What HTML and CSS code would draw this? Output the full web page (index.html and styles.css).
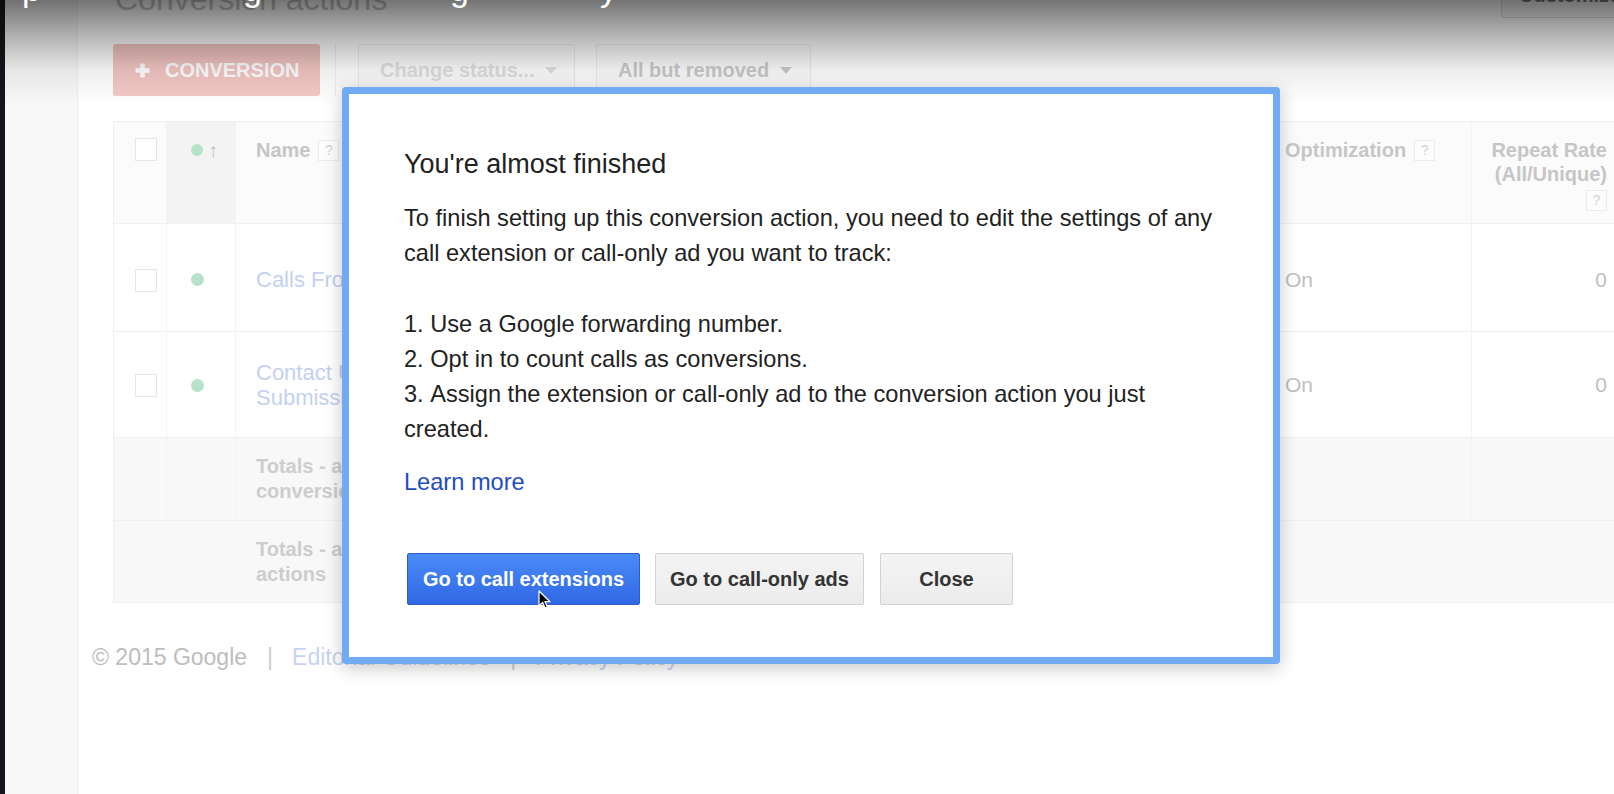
FILE: index.html
```html
<!DOCTYPE html>
<html lang="en">
<head>
<meta charset="utf-8">
<title>Conversion actions</title>
<link rel="stylesheet" href="styles.css">
</head>
<body>
  <div class="edge"></div>
  <aside class="sidebar"></aside>
  <main class="main">
    <div class="headrow">
      <h1 class="page-title">Conversion actions</h1>
      <div class="custom-btn">Customize columns</div>
    </div>

    <div class="toolbar">
      <div class="btn-add">
        <svg class="plus" width="15" height="15" viewBox="0 0 15 15"><path d="M7.5 0.5v14M0.5 7.5h14" stroke="#fff" stroke-width="4.5"/></svg>
        <span>CONVERSION</span>
      </div>
      <div class="tb-divider"></div>
      <div class="btn-drop is-disabled">
        <span>Change status...</span>
        <svg class="caret" width="12" height="7" viewBox="0 0 12 7"><path d="M0 0h12L6 7z" fill="currentColor"/></svg>
      </div>
      <div class="btn-drop is-filter">
        <span>All but removed</span>
        <svg class="caret" width="12" height="7" viewBox="0 0 12 7"><path d="M0 0h12L6 7z" fill="currentColor"/></svg>
      </div>
    </div>

    <div class="table">
      <div class="tr thead">
        <div class="td c-check"><span class="cb"></span></div>
        <div class="td c-status is-sorted"><span class="dot dot-sm"></span><span class="sort">&#8593;</span></div>
        <div class="td c-name"><span>Name</span><span class="help">?</span></div>
        <div class="td c-mid"></div>
        <div class="td c-opt"><span>Optimization</span><span class="help">?</span></div>
        <div class="td c-rate"><span class="rate-head">Repeat Rate<br>(All/Unique)<br><span class="help">?</span></span></div>
      </div>
      <div class="tr row row-1">
        <div class="td c-check"><span class="cb"></span></div>
        <div class="td c-status"><span class="dot"></span></div>
        <div class="td c-name"><a class="name-link">Calls From Ads</a></div>
        <div class="td c-mid"></div>
        <div class="td c-opt">On</div>
        <div class="td c-rate">0</div>
      </div>
      <div class="tr row row-2">
        <div class="td c-check"><span class="cb"></span></div>
        <div class="td c-status"><span class="dot"></span></div>
        <div class="td c-name"><a class="name-link">Contact Us Form<br>Submissions</a></div>
        <div class="td c-mid"></div>
        <div class="td c-opt">On</div>
        <div class="td c-rate">0</div>
      </div>
      <div class="tr total total-1">
        <div class="td c-check"></div>
        <div class="td c-status"></div>
        <div class="td c-name"><span class="total-label">Totals - all<br>conversions</span></div>
        <div class="td c-mid"></div>
        <div class="td c-opt"></div>
        <div class="td c-rate"></div>
      </div>
      <div class="tr total total-2">
        <div class="td c-check"></div>
        <div class="td c-status"></div>
        <div class="td c-name"><span class="total-label">Totals - all conversion<br>actions</span></div>
        <div class="td c-mid"></div>
        <div class="td c-opt"></div>
        <div class="td c-rate"></div>
      </div>
    </div>

    <footer class="footer">
      <span>&copy; 2015 Google</span>
      <span class="sep">|</span>
      <a class="foot-link">Editorial Guidelines</a>
      <span class="sep">|</span>
      <a class="foot-link">Privacy Policy</a>
    </footer>
  </main>

  <div class="shade"></div>
  <div class="vt">
    <span class="vt-l vt-1">p</span>
    <span class="vt-l vt-2">g</span>
    <span class="vt-l vt-3">g</span>
    <span class="vt-l vt-4">y</span>
  </div>

  <div class="modal" role="dialog">
    <h2 class="modal-title">You're almost finished</h2>
    <p class="modal-text">To finish setting up this conversion action, you need to edit the settings of any<br>call extension or call-only ad you want to track:</p>
    <ol class="modal-list">
      <li>Use a Google forwarding number.</li>
      <li>Opt in to count calls as conversions.</li>
      <li>Assign the extension or call-only ad to the conversion action you just<br>created.</li>
    </ol>
    <a class="modal-link">Learn more</a>
    <div class="modal-actions">
      <button class="btn btn-primary">Go to call extensions</button>
      <button class="btn btn-secondary">Go to call-only ads</button>
      <button class="btn btn-close">Close</button>
    </div>
  </div>

  <svg class="cursor" width="13" height="19" viewBox="0 0 13 19"><path d="M1 1v15l3.6-3.5 2.6 5.6 2.2-1-2.5-5.4H12z" fill="#000" stroke="#fff" stroke-width="1.2" stroke-linejoin="round"/></svg>
</body>
</html>
```

FILE: styles.css
```css
* { box-sizing: border-box; }

html, body { height: 100%; }

body {
  margin: 0;
  width: 1614px;
  height: 794px;
  overflow: hidden;
  display: flex;
  position: relative;
  background: #fff;
  font-family: "Liberation Sans", Arial, Helvetica, sans-serif;
}

.edge {
  flex: none;
  width: 5px;
  background: #13161b;
}

.sidebar {
  flex: none;
  width: 73px;
  background: #f8f8f8;
  border-right: 1px solid #eeeeee;
}

.main {
  flex: 1;
  min-width: 0;
  padding-left: 14px;
  display: flex;
  flex-direction: column;
}

/* heading row */
.headrow {
  display: flex;
  align-items: flex-end;
  justify-content: space-between;
  height: 46px;
  margin: -28px 0 0 21px;
}

.page-title {
  margin: 0 0 1px;
  padding-left: 2px;
  font-size: 32px;
  line-height: 36px;
  font-weight: normal;
  color: #c4c4c4;
  white-space: nowrap;
}

.custom-btn {
  flex: none;
  width: 130px;
  height: 46px;
  margin-right: -17px;
  padding: 10px 0 0 17px;
  border: 1px solid #dcdcdc;
  border-radius: 3px;
  background: #f7f7f7;
  font-size: 20px;
  line-height: 24px;
  font-weight: bold;
  color: #7a7a7a;
  white-space: nowrap;
  overflow: hidden;
}

/* toolbar */
.toolbar {
  display: flex;
  height: 52px;
  margin: 26px 0 0 21px;
}

.btn-add {
  width: 207px;
  display: flex;
  align-items: center;
  gap: 15px;
  padding-left: 22px;
  border-radius: 3px;
  background: linear-gradient(#f1c2bf, #f4cac7);
  color: #fff;
  font-size: 20px;
  font-weight: bold;
}

.plus { flex: none; }

.tb-divider {
  width: 1px;
  margin: 0 22px 0 15px;
  background: #efefef;
}

.btn-drop {
  display: flex;
  align-items: center;
  gap: 11px;
  padding: 0 20px 0 21px;
  border: 1px solid #ededed;
  border-radius: 2px;
  background: #fdfdfd;
  font-size: 20px;
  font-weight: bold;
  color: #cacaca;
  white-space: nowrap;
}

.btn-drop.is-disabled {
  width: 217px;
  color: #e0e0e0;
}

.btn-drop.is-filter {
  width: 215px;
  margin-left: 21px;
}

.caret { flex: none; }

/* table */
.table {
  margin: 25px 0 0 21px;
  border: 1px solid #f0f0f0;
  border-right: none;
}

.tr {
  display: grid;
  grid-template-columns: 53px 69px 240px 1fr 196px 142px;
  border-bottom: 1px solid #f0f0f0;
}

.tr:last-child { border-bottom: none; }

.td {
  display: flex;
  align-items: center;
  border-right: 1px solid #f4f4f4;
  min-width: 0;
}

.td:last-child {
  border-right: none;
  justify-content: flex-end;
  padding-right: 7px;
}

.thead {
  height: 102px;
  background: #fbfbfb;
  font-size: 20px;
  line-height: 24px;
  font-weight: bold;
  color: #c6c6c6;
}

.thead .td {
  align-items: flex-start;
  padding-top: 16px;
}

.thead .c-status.is-sorted { background: #f3f3f3; }

.c-check { padding-left: 21px; }
.c-status { padding-left: 24px; gap: 5px; }
.c-name { padding-left: 20px; }
.c-opt { padding-left: 9px; }

.cb {
  display: block;
  width: 22px;
  height: 23px;
  border: 1px solid #e6e6e6;
  background: #fff;
}

.dot {
  display: block;
  width: 13px;
  height: 13px;
  border-radius: 50%;
  background: #b6e2ca;
}

.dot-sm {
  width: 12px;
  height: 12px;
  margin-top: 6px;
}

.sort {
  font-size: 20px;
  font-weight: bold;
  color: #c4c4c4;
}

.help {
  display: inline-block;
  width: 21px;
  height: 21px;
  margin-left: 8px;
  border: 1px solid #ececec;
  background: #fdfdfd;
  font-size: 14px;
  line-height: 19px;
  text-align: center;
  font-weight: normal;
  color: #d3d3d3;
}

.c-name .help, .c-opt .help { margin-top: 2px; }

.rate-head {
  text-align: right;
}

.rate-head .help {
  margin: 3px 0 0;
}

.row {
  font-size: 21px;
  color: #c0c0c0;
}

.row-1 { height: 108px; }
.row-1 .td { padding-top: 4px; }
.row-1 .c-check { padding-top: 5px; }
.row-2 { height: 106px; }
.row-2 .td { padding-top: 1px; }

.name-link {
  font-size: 22px;
  line-height: 25px;
  color: #c3d1f1;
}

.total {
  background: #f8f8f8;
  font-size: 20px;
  line-height: 25px;
  font-weight: bold;
  color: #cdcdcd;
}

.total-1 { height: 83px; }
.total-2 { height: 81px; }

.total-2 .td { border-right-color: transparent; }

.total-label { white-space: nowrap; }

/* footer */
.footer {
  display: flex;
  margin-top: 39px;
  font-size: 23px;
  line-height: 30px;
  color: #bdbdbd;
  white-space: nowrap;
}

.sep {
  margin: 0 19px 0 20px;
  color: #cccccc;
}

.foot-link { color: #c6d3f3; }

/* video overlay shading */
.shade {
  position: absolute;
  left: 0;
  top: 0;
  right: 0;
  height: 110px;
  background: linear-gradient(rgba(0,0,0,.55), rgba(0,0,0,.28) 37px, rgba(0,0,0,.07) 70px, rgba(0,0,0,0) 105px);
  pointer-events: none;
  z-index: 1;
}

.vt {
  position: absolute;
  left: 0;
  top: 0;
  z-index: 2;
  font-size: 34px;
  line-height: 34px;
  color: #fff;
}

.vt-l { position: absolute; top: -28px; }
.vt-1 { left: 22px; }
.vt-2 { left: 243px; }
.vt-3 { left: 450px; }
.vt-4 { left: 600px; }

/* dialog */
.modal {
  position: absolute;
  left: 342px;
  top: 87px;
  width: 938px;
  padding: 54px 30px 52px 55px;
  border: 7px solid #73aaf4;
  border-radius: 4px;
  background: #fff;
  box-shadow: 0 4px 18px rgba(0,0,0,.22);
  color: #222;
  z-index: 3;
}

.modal-title {
  margin: 0 0 21px;
  font-size: 27px;
  line-height: 32px;
  font-weight: normal;
  color: #222;
}

.modal-text,
.modal-list {
  margin: 0;
  font-size: 23.6px;
  line-height: 35.2px;
  white-space: nowrap;
}

.modal-text { margin-bottom: 35.2px; }

.modal-list {
  padding: 0;
  list-style: decimal inside;
}

.modal-link {
  display: block;
  margin-top: 18px;
  font-size: 23.6px;
  line-height: 35.2px;
  color: #1f4dc3;
}

.modal-actions {
  display: flex;
  gap: 15px;
  margin-top: 52.5px;
  padding-left: 3px;
}

.btn {
  height: 52px;
  padding: 0;
  border: 1px solid #d2d2d2;
  border-radius: 2px;
  font-family: inherit;
  font-size: 20px;
  font-weight: bold;
  text-align: center;
  white-space: nowrap;
}

.btn-primary {
  width: 233px;
  border-color: #2c5dcb;
  background: linear-gradient(#4a8bf8, #3168e4);
  color: #fff;
}

.btn-secondary {
  width: 209px;
  background: linear-gradient(#f4f4f4, #ececec);
  color: #333;
}

.btn-close {
  width: 133px;
  margin-left: 1px;
  background: linear-gradient(#f4f4f4, #ececec);
  color: #333;
}

.cursor {
  position: absolute;
  left: 538px;
  top: 590px;
  z-index: 4;
}
```
